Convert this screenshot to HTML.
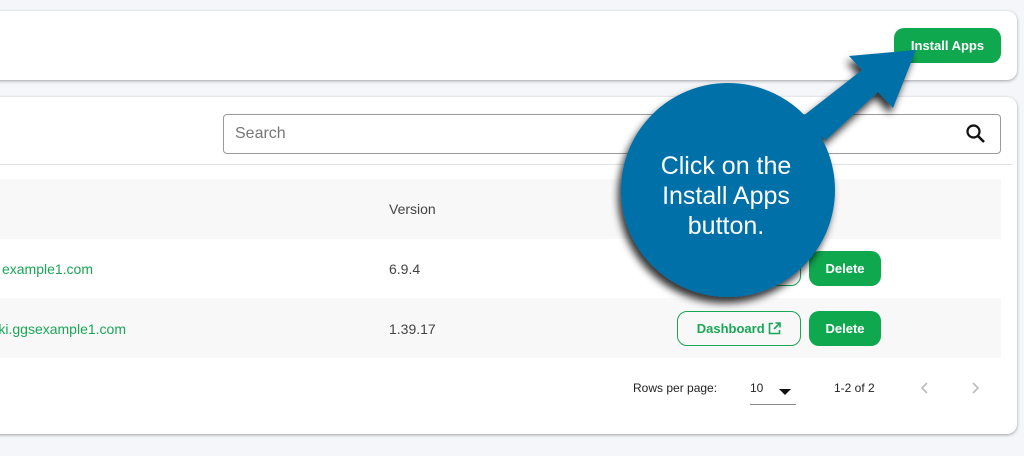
<!DOCTYPE html>
<html><head><style>
*{margin:0;padding:0;box-sizing:border-box}
body{width:1024px;height:456px;background:#f5f6fa;font-family:"Liberation Sans",Arial,sans-serif;position:relative;overflow:hidden;color:#333}
.card{position:absolute;left:-12px;right:7px;background:#fff;border-radius:10px;box-shadow:0 1px 3px rgba(0,0,0,.35)}
.abs{position:absolute}
.btn{position:absolute;border-radius:10px;background:#10a84f;color:#fff;font-weight:bold;font-size:13px;display:flex;align-items:center;justify-content:center}
.t{position:absolute;font-size:14px;white-space:nowrap}
.g{color:#1aa657}
</style></head><body>
<div class="card" style="top:11px;height:69px"></div>
<div class="btn" style="left:894px;top:28px;width:107px;height:35px">Install Apps</div>
<div class="card" style="top:97px;height:337px"></div>
<div class="abs" style="left:223px;top:114px;width:778px;height:40px;border:1px solid #9a9a9a;border-radius:4px;background:#fff"></div>
<div class="t" style="left:235px;top:125px;font-size:16px;color:#777">Search</div>
<svg class="abs" style="left:965px;top:123px" width="22" height="22" viewBox="0 0 22 22"><circle cx="8.5" cy="8.5" r="6" fill="none" stroke="#111" stroke-width="2.2"/><path d="M13 13L19 19" stroke="#111" stroke-width="2.6"/></svg>
<div class="abs" style="left:0;top:164px;width:1013px;height:1px;background:#e2e2e2"></div>
<div class="abs" style="left:0;top:179px;width:1001px;height:60px;background:#f8f8f8"></div>
<div class="abs" style="left:0;top:298px;width:1001px;height:60px;background:#f8f8f8"></div>
<div class="t" style="left:389px;top:201px;color:#444">Version</div>
<div class="t g" style="right:931px;top:261px">example1.com</div>
<div class="t" style="left:389px;top:261px;color:#444">6.9.4</div>
<div class="t g" style="right:898px;top:321px">ki.ggsexample1.com</div>
<div class="t" style="left:389px;top:321px;color:#444">1.39.17</div>
<div class="abs" style="left:677px;top:251px;width:124px;height:35px;border:1px solid #1aa657;border-radius:10px"></div>
<div class="btn" style="left:809px;top:251px;width:72px;height:35px">Delete</div>
<div class="abs g" style="left:677px;top:311px;width:124px;height:35px;border:1px solid #1aa657;border-radius:10px;display:flex;align-items:center;justify-content:center;font-size:13px;font-weight:bold">Dashboard&nbsp;<svg width="13" height="13" viewBox="0 0 13 13"><path d="M5 1.5H1.5V11.5H11.5V8M7.5 1H12V5.5M12 1L6 7" fill="none" stroke="#1aa657" stroke-width="1.6"/></svg></div>
<div class="btn" style="left:809px;top:311px;width:72px;height:35px">Delete</div>
<div class="t" style="left:633px;top:381px;font-size:12px;color:#222">Rows per page:</div>
<div class="t" style="left:750px;top:381px;font-size:12px;color:#222">10</div>
<svg class="abs" style="left:779px;top:389px" width="12" height="7"><path d="M0 0H12L6 6Z" fill="#111"/></svg>
<div class="abs" style="left:750px;top:404px;width:46px;height:1px;background:#888"></div>
<div class="t" style="left:834px;top:381px;font-size:12px;color:#222">1-2 of 2</div>
<svg class="abs" style="left:920px;top:381px" width="10" height="14"><path d="M7 2L2 7L7 12" fill="none" stroke="#bbb" stroke-width="1.6"/></svg>
<svg class="abs" style="left:970px;top:381px" width="10" height="14"><path d="M3 2L8 7L3 12" fill="none" stroke="#bbb" stroke-width="1.6"/></svg>
<svg class="abs" style="left:0;top:0" width="1024" height="456">
<defs><filter id="s" x="-30%" y="-30%" width="160%" height="160%"><feGaussianBlur in="SourceAlpha" stdDeviation="4"/><feOffset dx="-3" dy="6"/><feComponentTransfer><feFuncA type="linear" slope="0.8"/></feComponentTransfer><feMerge><feMergeNode/><feMergeNode in="SourceGraphic"/></feMerge></filter></defs>
<g filter="url(#s)" fill="#0670a8">
<polygon points="798,120 862,70 849,56 916,50 893,108 878,92 826,140"/>
<circle cx="728" cy="190" r="107"/>
</g>
<g fill="#fff" font-family="Liberation Sans,Arial,sans-serif" font-size="25" text-anchor="middle">
<text x="726" y="174">Click on the</text>
<text x="726" y="204">Install Apps</text>
<text x="726" y="234">button.</text>
</g>
</svg>
</body></html>
